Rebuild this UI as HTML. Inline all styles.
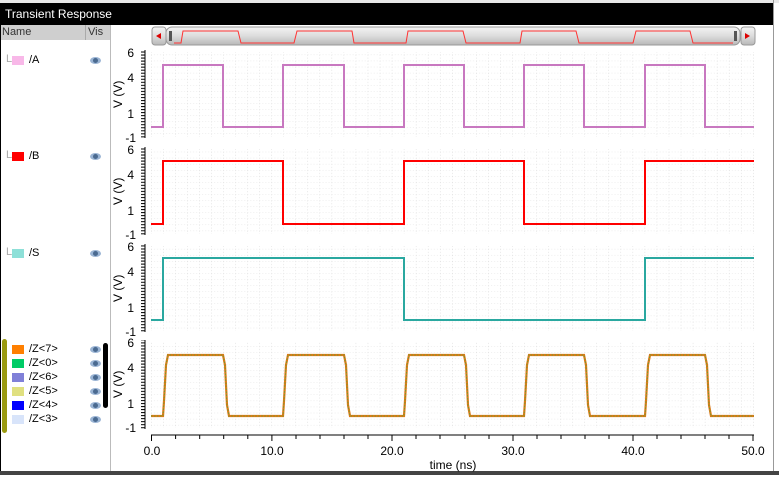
<!DOCTYPE html><html><head><style>
body{margin:0;width:779px;height:477px;background:#fff;overflow:hidden;font-family:"Liberation Sans",sans-serif;position:relative}
.t{position:absolute;font-size:11px;color:#000}
.sw{position:absolute;width:12px;height:9px}
.eye{position:absolute;width:11px;height:7px;border-radius:50%;background:#9ab4d4;}
.eye:after{content:"";position:absolute;left:3px;top:1px;width:5px;height:5px;border-radius:50%;background:#4a6a90}
</style></head><body>
<div style="position:absolute;left:0;top:0;width:779px;height:3px;background:#e8e8e8"></div>
<div style="position:absolute;left:0;top:3px;width:773px;height:22px;background:#000"></div>
<div style="position:absolute;left:5px;top:7px;color:#fff;font-size:12px">Transient Response</div>
<div style="position:absolute;left:0;top:25px;width:1px;height:450px;background:#000"></div>
<div style="position:absolute;left:1px;top:25px;width:109px;height:15px;background:#cfcfcf"></div>
<div style="position:absolute;left:85px;top:25px;width:1px;height:15px;background:#aaa"></div>
<div class="t" style="left:2px;top:26px;color:#333">Name</div>
<div class="t" style="left:88px;top:26px;color:#333">Vis</div>
<div style="position:absolute;left:110px;top:25px;width:1px;height:447px;background:#bbb"></div>
<div style="position:absolute;left:773px;top:0;width:1px;height:475px;background:#999"></div>
<div style="position:absolute;left:0;top:471px;width:779px;height:4px;background:#444"></div>

<div class="t" style="left:6px;top:53px;color:#aaa">L</div><div class="sw" style="left:12px;top:56px;background:#f8b8e8"></div><div class="t" style="left:29px;top:54px">/A</div><div class="eye" style="left:90px;top:57px"></div>
<div class="t" style="left:6px;top:149px;color:#aaa">L</div><div class="sw" style="left:12px;top:152px;background:#f00"></div><div class="t" style="left:29px;top:150px">/B</div><div class="eye" style="left:90px;top:153px"></div>
<div class="t" style="left:6px;top:246px;color:#aaa">L</div><div class="sw" style="left:12px;top:249px;background:#8ee0d8"></div><div class="t" style="left:29px;top:247px">/S</div><div class="eye" style="left:90px;top:250px"></div>

<div style="position:absolute;left:2px;top:339px;width:5px;height:94px;background:#9a9a10;border-radius:3px"></div>
<div style="position:absolute;left:103px;top:343px;width:5px;height:65px;background:#000;border-radius:3px"></div>
<div class="sw" style="left:12px;top:345px;background:#ff7f00"></div><div class="t" style="left:29px;top:343px">/Z&lt;7&gt;</div><div class="eye" style="left:90px;top:346px"></div>
<div class="sw" style="left:12px;top:359px;background:#00cc66"></div><div class="t" style="left:29px;top:357px">/Z&lt;0&gt;</div><div class="eye" style="left:90px;top:360px"></div>
<div class="sw" style="left:12px;top:373px;background:#8080d8"></div><div class="t" style="left:29px;top:371px">/Z&lt;6&gt;</div><div class="eye" style="left:90px;top:374px"></div>
<div class="sw" style="left:12px;top:387px;background:#e0e080"></div><div class="t" style="left:29px;top:385px">/Z&lt;5&gt;</div><div class="eye" style="left:90px;top:388px"></div>
<div class="sw" style="left:12px;top:401px;background:#0000ff"></div><div class="t" style="left:29px;top:399px">/Z&lt;4&gt;</div><div class="eye" style="left:90px;top:402px"></div>
<div class="sw" style="left:12px;top:415px;background:#d8e4fa"></div><div class="t" style="left:29px;top:413px">/Z&lt;3&gt;</div><div class="eye" style="left:90px;top:416px"></div>

<svg style="position:absolute;left:0;top:0" width="779" height="477" font-family="Liberation Sans" font-size="12">
<defs>
<linearGradient id="g" x1="0" y1="0" x2="0" y2="1"><stop offset="0" stop-color="#f4f4f4"/><stop offset="0.5" stop-color="#dcdcdc"/><stop offset="1" stop-color="#b8b8b8"/></linearGradient>
<pattern id="grid" width="12.04" height="6.07" patternUnits="userSpaceOnUse" x="151">
<line x1="0" y1="0" x2="0" y2="6.07" stroke="#ccc" stroke-width="1" stroke-dasharray="1,2"/>
<line x1="0" y1="0" x2="12.04" y2="0" stroke="#ddd" stroke-width="1" stroke-dasharray="1,2"/>
</pattern>
<pattern id="tk" width="4" height="3.03" patternUnits="userSpaceOnUse"><line x1="0" y1="0.5" x2="4" y2="0.5" stroke="#000"/></pattern>
</defs>
<rect x="152" y="27" width="14" height="18" rx="3" fill="url(#g)" stroke="#999"/>
<polygon points="156,36 161,33 161,39" fill="#d00"/>
<rect x="166" y="27" width="574" height="18" rx="6" fill="url(#g)" stroke="#999"/>
<rect x="169" y="31" width="3" height="10" fill="#555"/><rect x="734" y="31" width="3" height="10" fill="#555"/>
<rect x="741" y="27" width="14" height="18" rx="3" fill="url(#g)" stroke="#999"/>
<polygon points="745,33 750,36 745,39" fill="#d00"/>
<polyline fill="none" stroke="#f33" stroke-width="1" points="174,43 181,43 183,31 238,31 241,43 294,43 297,31 352,31 354,43 406,43 408,31 463,31 466,43 520,43 522,31 576,31 579,43 633,43 636,31 690,31 693,43 733,43"/>

<g>
<rect x="151" y="52" width="603" height="85" fill="url(#grid)"/>
<rect x="151" y="149" width="603" height="85" fill="url(#grid)"/>
<rect x="151" y="246" width="603" height="85" fill="url(#grid)"/>
<rect x="151" y="342" width="603" height="86" fill="url(#grid)"/>
</g>
<g stroke="#000">
<line x1="145" y1="50" x2="145" y2="138"/><line x1="145" y1="147" x2="145" y2="235"/><line x1="145" y1="244" x2="145" y2="332"/><line x1="145" y1="340" x2="145" y2="429"/>
</g>
<rect x="141" y="50" width="4" height="88" fill="url(#tk)"/>
<rect x="141" y="147" width="4" height="88" fill="url(#tk)"/>
<rect x="141" y="244" width="4" height="88" fill="url(#tk)"/>
<rect x="141" y="340" width="4" height="89" fill="url(#tk)"/>
<g text-anchor="end" font-size="12">
<text x="134" y="57">6</text><text x="134" y="82">4</text><text x="134" y="118">1</text><text x="136" y="142">-1</text>
<text x="134" y="154">6</text><text x="134" y="179">4</text><text x="134" y="215">1</text><text x="136" y="239">-1</text>
<text x="134" y="251">6</text><text x="134" y="276">4</text><text x="134" y="312">1</text><text x="136" y="336">-1</text>
<text x="134" y="347">6</text><text x="134" y="372">4</text><text x="134" y="408">1</text><text x="136" y="432">-1</text>
</g>
<g font-size="12">
<text transform="translate(122,108) rotate(-90)">V (V)</text>
<text transform="translate(122,205) rotate(-90)">V (V)</text>
<text transform="translate(122,302) rotate(-90)">V (V)</text>
<text transform="translate(122,398) rotate(-90)">V (V)</text>
</g>
<polyline fill="none" stroke="#c878c0" stroke-width="2" points="151,127 163,127 163,65 223,65 223,127 283,127 283,65 344,65 344,127 404,127 404,65 464,65 464,127 524,127 524,65 584,65 584,127 645,127 645,65 705,65 705,127 754,127"/>
<polyline fill="none" stroke="#f00" stroke-width="2" points="151,224 163,224 163,161 283,161 283,224 404,224 404,161 524,161 524,224 645,224 645,161 754,161"/>
<polyline fill="none" stroke="#2aa8a0" stroke-width="2" points="151,320 163,320 163,258 404,258 404,320 645,320 645,258 754,258"/>
<polyline fill="none" stroke="#e07818" stroke-width="2.2" points="151,416 163,416 164,401 166,365 168,355 223,355 225,365 227,405 229,416 283,416 284,401 286,365 288,355 344,355 346,365 348,405 350,416 404,416 405,401 407,365 409,355 464,355 466,365 468,405 470,416 524,416 525,401 527,365 529,355 584,355 586,365 588,405 590,416 645,416 646,401 648,365 650,355 705,355 707,365 709,405 711,416 754,416"/>
<polyline fill="none" stroke="#6aa030" stroke-width="1" stroke-dasharray="1.5,1.5" points="151,416 163,416 164,401 166,365 168,355 223,355 225,365 227,405 229,416 283,416 284,401 286,365 288,355 344,355 346,365 348,405 350,416 404,416 405,401 407,365 409,355 464,355 466,365 468,405 470,416 524,416 525,401 527,365 529,355 584,355 586,365 588,405 590,416 645,416 646,401 648,365 650,355 705,355 707,365 709,405 711,416 754,416"/>
<line x1="151" y1="435" x2="754" y2="435" stroke="#000"/>
<g stroke="#000">
<line x1="151.5" y1="435" x2="151.5" y2="441"/><line x1="175.6" y1="435" x2="175.6" y2="439"/><line x1="199.7" y1="435" x2="199.7" y2="439"/><line x1="223.7" y1="435" x2="223.7" y2="439"/><line x1="247.8" y1="435" x2="247.8" y2="439"/>
<line x1="271.9" y1="435" x2="271.9" y2="441"/><line x1="296" y1="435" x2="296" y2="439"/><line x1="320" y1="435" x2="320" y2="439"/><line x1="344" y1="435" x2="344" y2="439"/><line x1="368" y1="435" x2="368" y2="439"/>
<line x1="392" y1="435" x2="392" y2="441"/><line x1="416" y1="435" x2="416" y2="439"/><line x1="440" y1="435" x2="440" y2="439"/><line x1="465" y1="435" x2="465" y2="439"/><line x1="489" y1="435" x2="489" y2="439"/>
<line x1="513" y1="435" x2="513" y2="441"/><line x1="537" y1="435" x2="537" y2="439"/><line x1="561" y1="435" x2="561" y2="439"/><line x1="585" y1="435" x2="585" y2="439"/><line x1="609" y1="435" x2="609" y2="439"/>
<line x1="633" y1="435" x2="633" y2="441"/><line x1="657" y1="435" x2="657" y2="439"/><line x1="681" y1="435" x2="681" y2="439"/><line x1="705" y1="435" x2="705" y2="439"/><line x1="729" y1="435" x2="729" y2="439"/><line x1="753" y1="435" x2="753" y2="441"/>
</g>
<g text-anchor="middle" font-size="12">
<text x="152" y="455">0.0</text><text x="272" y="455">10.0</text><text x="392" y="455">20.0</text><text x="513" y="455">30.0</text><text x="633" y="455">40.0</text><text x="753" y="455">50.0</text>
<text x="453" y="469">time (ns)</text>
</g>
</svg>
</body></html>
